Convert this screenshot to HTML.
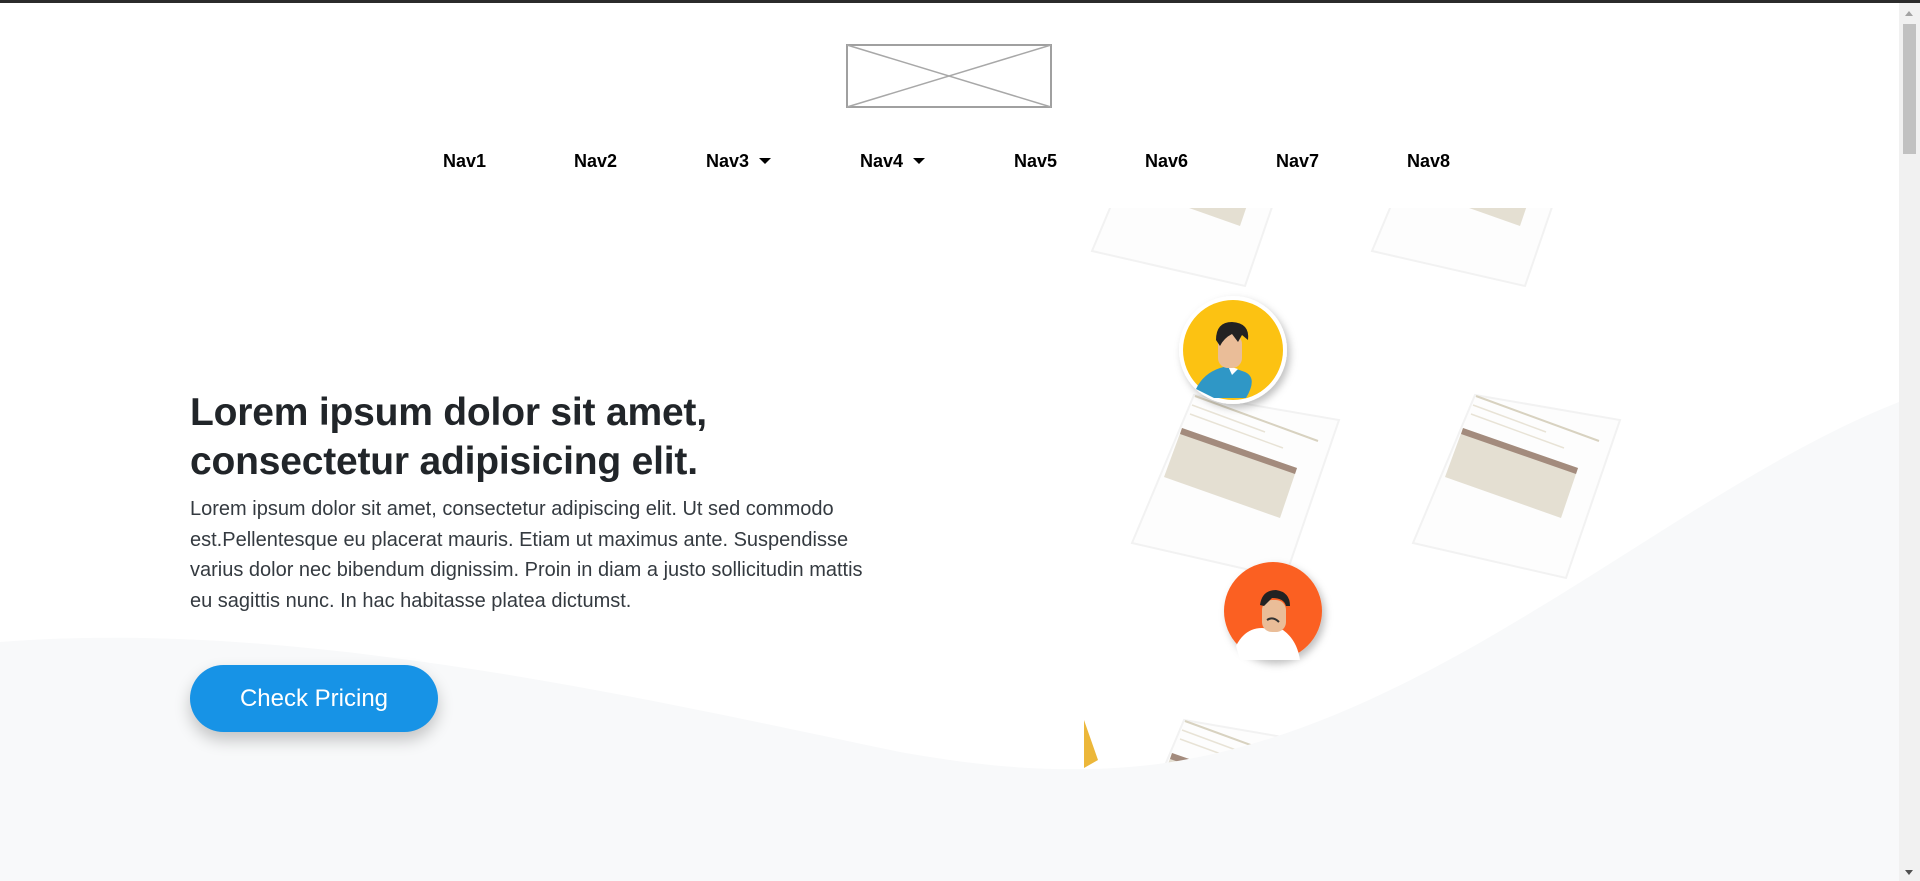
<!DOCTYPE html>
<html><head><meta charset="utf-8"><style>
html,body{margin:0;padding:0;width:1920px;height:881px;overflow:hidden;background:#fff;font-family:"Liberation Sans",sans-serif;color:#212529}
.topbar{position:absolute;left:0;top:0;width:1920px;height:3px;background:#2b2b2b}
.sb{position:absolute;right:0;top:3px;width:21px;height:878px;background:#f1f1f1}
.sb .th{position:absolute;left:4px;top:21px;width:13px;height:130px;background:#c1c1c1}
.sb .up,.sb .dn{position:absolute;left:6px;width:0;height:0;border-left:4px solid transparent;border-right:4px solid transparent}
.sb .up{top:8px;border-bottom:5px solid #a3a3a3}
.sb .dn{bottom:6px;border-top:5px solid #505050}
.logo{position:absolute;left:846px;top:44px}
.nav{position:absolute;top:151px;font-size:18px;font-weight:bold;color:#000;white-space:nowrap}
.caret{display:inline-block;margin-left:10px;vertical-align:3px;border-left:6px solid transparent;border-right:6px solid transparent;border-top:6px solid #000}
h1{position:absolute;left:190px;top:388px;margin:0;font-size:39px;line-height:49px;font-weight:bold;white-space:nowrap;letter-spacing:-0.2px}
p{position:absolute;left:190px;top:494px;margin:0;font-size:20px;line-height:30.6px;color:#343a40;white-space:nowrap}
.btn{position:absolute;left:190px;top:665px;width:248px;height:67px;border-radius:34px;background:#1793e6;color:#fff;font-size:24px;line-height:67px;text-align:center;box-shadow:0 8px 16px rgba(0,0,0,.22)}
</style></head><body>
<svg width="1899" height="881" style="position:absolute;left:0;top:0">
<defs>
<clipPath id="ill"><rect x="1084" y="208" width="560" height="560"/></clipPath>
<filter id="sh" x="-30%" y="-30%" width="160%" height="160%"><feDropShadow dx="3" dy="4" stdDeviation="4" flood-color="#000" flood-opacity="0.25"/></filter>
</defs>
<g clip-path="url(#ill)">
 <g id="card">
  <polygon points="1194,395 1339,420 1285,578 1132,543" fill="#fdfdfd" stroke="#f2f2f2" stroke-width="2"/>
  <line x1="1195" y1="396" x2="1318" y2="441" stroke="#d8d2c0" stroke-width="2"/>
  <line x1="1192" y1="405" x2="1265" y2="432" stroke="#e8e3d6" stroke-width="1.5"/>
  <line x1="1190" y1="414" x2="1283" y2="448" stroke="#e8e3d6" stroke-width="1.5"/>
  <polygon points="1182,428 1297,468 1280,518 1164,477" fill="#e4dfd2"/>
  <polygon points="1182,428 1297,468 1295,474 1180,434" fill="#a38b7d"/>
 </g>
 <use href="#card" transform="translate(281,0)"/>
 <use href="#card" transform="translate(-40,-292)"/>
 <use href="#card" transform="translate(240,-292)"/>
 <use href="#card" transform="translate(-10,325)"/>
 <polygon points="1084,720 1098,760 1084,768" fill="#ecb73a"/>
 <g filter="url(#sh)">
  <circle cx="1233" cy="350" r="54" fill="#fff"/>
 </g>
 <circle cx="1233" cy="350" r="50" fill="#fcc212"/>
 <path d="M1196,389 Q1205,370 1228,366 L1245,372 Q1258,378 1246,398 L1214,398 Z" fill="#2f97c6"/>
 <path d="M1228,366 L1232,375 L1238,369 Z" fill="#fff"/>
 <rect x="1218" y="334" width="24" height="34" rx="10" fill="#eabd98"/>
 <path d="M1216,340 Q1216,322 1232,322 Q1250,323 1248,340 L1242,335 L1238,342 L1232,334 Q1224,338 1220,346 Z" fill="#222"/>
 <g filter="url(#sh)"><circle cx="1273" cy="611" r="49" fill="#fb6120"/></g>
 <path d="M1236,646 Q1245,628 1262,628 L1283,630 Q1297,640 1300,660 L1240,660 Z" fill="#fff"/>
 <rect x="1262" y="600" width="24" height="32" rx="10" fill="#eabd98"/>
 <path d="M1260,605 Q1262,590 1276,590 Q1290,592 1290,606 L1286,606 Q1284,598 1272,598 L1264,606 Z" fill="#222"/>
 <path d="M1267,620 Q1273,616 1279,622" stroke="#333" stroke-width="2" fill="none"/>
</g>
<path d="M0,642 C300,618 650,700 900,752 C980,766 1030,770 1090,769 C1400,765 1650,500 1899,402 L1899,881 L0,881 Z" fill="#f8f9fa"/>
</svg>
<div class="topbar"></div>
<div class="sb"><div class="up"></div><div class="th"></div><div class="dn"></div></div>
<svg class="logo" width="206" height="64"><rect x="1" y="1" width="204" height="62" fill="#fff" stroke="#a0a0a0" stroke-width="2"/><line x1="1" y1="1" x2="205" y2="63" stroke="#a8a8a8" stroke-width="1.5"/><line x1="205" y1="1" x2="1" y2="63" stroke="#a8a8a8" stroke-width="1.5"/></svg>
<div class="nav" style="left:443px">Nav1</div>
<div class="nav" style="left:574px">Nav2</div>
<div class="nav" style="left:706px">Nav3<span class="caret"></span></div>
<div class="nav" style="left:860px">Nav4<span class="caret"></span></div>
<div class="nav" style="left:1014px">Nav5</div>
<div class="nav" style="left:1145px">Nav6</div>
<div class="nav" style="left:1276px">Nav7</div>
<div class="nav" style="left:1407px">Nav8</div>
<h1>Lorem ipsum dolor sit amet,<br>consectetur adipisicing elit.</h1>
<p>Lorem ipsum dolor sit amet, consectetur adipiscing elit. Ut sed commodo<br>est.Pellentesque eu placerat mauris. Etiam ut maximus ante. Suspendisse<br>varius dolor nec bibendum dignissim. Proin in diam a justo sollicitudin mattis<br>eu sagittis nunc. In hac habitasse platea dictumst.</p>
<div class="btn">Check Pricing</div>
</body></html>
